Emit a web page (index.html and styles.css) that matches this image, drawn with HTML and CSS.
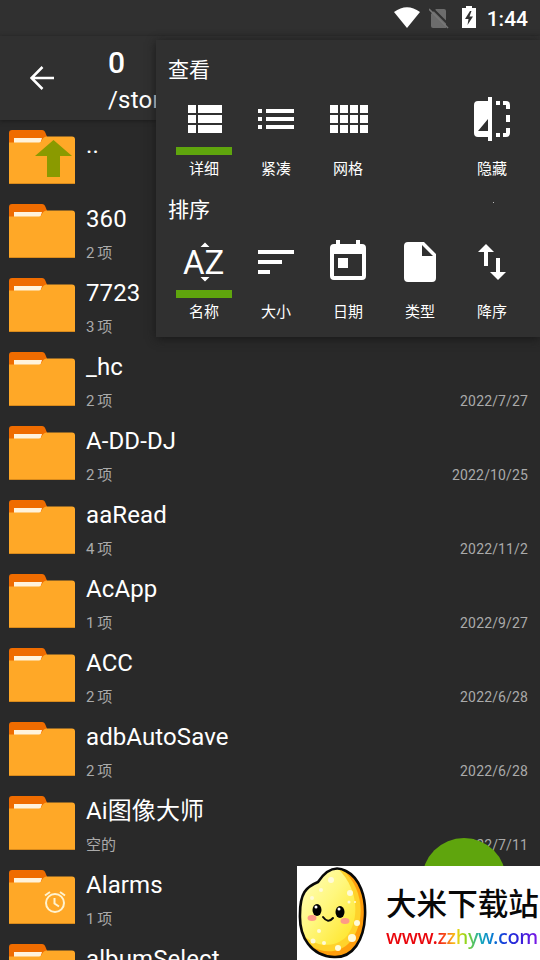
FILE: index.html
```html
<!DOCTYPE html>
<html lang="zh-CN">
<head>
<meta charset="utf-8">
<title>文件管理</title>
<link rel="stylesheet" href="styles.css">
</head>
<body>
<svg class="defs" width="0" height="0">
  <symbol id="folder" viewBox="0 0 66 54">
    <path fill="#ef6c00" d="M0 14V3Q0 0 3 0H33Q35.500 0 36.500 3L39 9V18H0Z"/>
    <path fill="#fff3dc" d="M5 8H33L31 14H5Z"/>
    <path fill="#ffa827" d="M0 12.500H30Q32 12.500 33 10Q34.500 6.500 38 6.500H63Q66 6.500 66 9.500V54H0Z"/>
    <path fill="#d98a1c" d="M0 53H66V54H0Z"/>
  </symbol>
</svg>
<div class="screen">
  <div class="status">
    <svg class="wifi" viewBox="0 0 26 21"><path fill="#fff" d="M0 5Q13-4.500 26 5L13 21Z"/></svg>
    <svg class="sim" viewBox="0 0 20 21"><path fill="#6c6c6c" d="M7 1H15Q17 1 17 3V20H4Q2 20 2 18V6Z"/><path stroke="#303030" stroke-width="2" d="M2-1L21 18"/><path stroke="#777" stroke-width="1.600" d="M0 1L19 20"/></svg>
    <svg class="battery" viewBox="0 0 14 22"><path fill="#fff" d="M4 0H10V2H14V22H0V2H4Z"/><path fill="#303030" d="M8 5L3 13H6.500L5.500 19L11 10.500H7.500L9.500 5Z"/></svg>
    <span class="clock">1:44</span>
  </div>
  <header class="header">
    <svg class="back" viewBox="0 0 24 24" fill="none" stroke="#fff" stroke-width="2.500"><path d="M24 12H2M12.500 1L1.500 12L12.500 23"/></svg>
    <div class="heading"><div class="title">0</div><div class="path">/storage</div></div>
  </header>
  <main class="list">
    <div class="row up"><div class="icon"><svg class="folder"><use href="#folder"/></svg><svg class="badge arrow" viewBox="0 0 37 37"><path fill="#8a9a00" d="M18.500 0L37 16H25V37H12V16H0Z"/></svg></div><div class="info"><div class="name">..</div></div></div>
    <div class="row"><svg class="folder"><use href="#folder"/></svg><div class="info"><div class="name">360</div><div class="count">2 项</div></div></div>
    <div class="row"><svg class="folder"><use href="#folder"/></svg><div class="info"><div class="name">7723</div><div class="count">3 项</div></div></div>
    <div class="row"><svg class="folder"><use href="#folder"/></svg><div class="info"><div class="name">_hc</div><div class="count">2 项</div></div><time>2022/7/27</time></div>
    <div class="row"><svg class="folder"><use href="#folder"/></svg><div class="info"><div class="name">A-DD-DJ</div><div class="count">2 项</div></div><time>2022/10/25</time></div>
    <div class="row"><svg class="folder"><use href="#folder"/></svg><div class="info"><div class="name">aaRead</div><div class="count">4 项</div></div><time>2022/11/2</time></div>
    <div class="row"><svg class="folder"><use href="#folder"/></svg><div class="info"><div class="name">AcApp</div><div class="count">1 项</div></div><time>2022/9/27</time></div>
    <div class="row"><svg class="folder"><use href="#folder"/></svg><div class="info"><div class="name">ACC</div><div class="count">2 项</div></div><time>2022/6/28</time></div>
    <div class="row"><svg class="folder"><use href="#folder"/></svg><div class="info"><div class="name">adbAutoSave</div><div class="count">2 项</div></div><time>2022/6/28</time></div>
    <div class="row"><svg class="folder"><use href="#folder"/></svg><div class="info"><div class="name">Ai图像大师</div><div class="count">空的</div></div><time>2022/7/11</time></div>
    <div class="row"><div class="icon"><svg class="folder"><use href="#folder"/></svg><svg class="badge alarm" viewBox="0 0 22 22" fill="none" stroke="#fff3d0" stroke-width="2"><circle cx="11" cy="12" r="9"/><path d="M10.500 7V12.500L15 15.500M1 4.500L6 1M21 4.500L16 1"/></svg></div><div class="info"><div class="name">Alarms</div><div class="count">1 项</div></div></div>
    <div class="row"><svg class="folder"><use href="#folder"/></svg><div class="info"><div class="name">albumSelect</div></div></div>
  </main>

  <div class="fab"></div>

  <section class="menu">
    <h2>查看</h2>
    <div class="options">
      <div class="option selected"><svg viewBox="0 0 48 48"><path d="M8 10h8v8H8zM18 10h24v8H18zM8 20h8v8H8zM18 20h24v8H18zM8 30h8v8H8zM18 30h24v8H18z"/></svg><i></i><span>详细</span></div>
      <div class="option"><svg viewBox="0 0 48 48"><path d="M6 14h4v4H6zM14 14h28v4H14zM6 22h4v4H6zM14 22h28v4H14zM6 30h4v4H6zM14 30h28v4H14z"/></svg><i></i><span>紧凑</span></div>
      <div class="option"><svg viewBox="0 0 48 48"><path d="M6 10h8v8H6zM16 10h8v8h-8zM26 10h8v8h-8zM36 10h8v8h-8zM6 20h8v8H6zM16 20h8v8h-8zM26 20h8v8h-8zM36 20h8v8h-8zM6 30h8v8H6zM16 30h8v8h-8zM26 30h8v8h-8zM36 30h8v8h-8z"/></svg><i></i><span>网格</span></div>
      <div class="option last"><svg viewBox="0 0 48 48"><path fill-rule="evenodd" d="M20 2h4v44h-4v-4H10q-4 0-4-4V10q0-4 4-4h10zM20 24L10 36h10z"/><path d="M28 6h4v4h-4zM28 38h4v4h-4zM35 6h3q4 0 4 4v4h-4v-4h-3zM38 20h4v7h-4zM38 33h4v5q0 4-4 4h-3v-4h3z"/></svg><i></i><span>隐藏</span></div>
    </div>
    <div class="sort-head"><h2>排序</h2><b class="dot"></b></div>
    <div class="options">
      <div class="option selected"><svg viewBox="0 0 48 48"><path d="M20.500 9L25 4.500L29.500 9zM20.500 39L25 43.500L29.500 39z"/><text x="3" y="35.500">A</text><text x="24.500" y="35.500">Z</text></svg><i></i><span>名称</span></div>
      <div class="option"><svg viewBox="0 0 48 48"><path d="M6 12h36v4H6zM6 22h24v4H6zM6 32h12v4H6z"/></svg><i></i><span>大小</span></div>
      <div class="option"><svg viewBox="0 0 48 48"><path fill-rule="evenodd" d="M12 2h4v4h16V2h4v4h2q4 0 4 4v28q0 4-4 4H10q-4 0-4-4V10q0-4 4-4h2zM10 16v22h28V16zM14 20h10v10H14z"/></svg><i></i><span>日期</span></div>
      <div class="option"><svg viewBox="0 0 48 48"><path fill-rule="evenodd" d="M12 4h16l12 12v24q0 4-4 4H12q-4 0-4-4V8q0-4 4-4zM26 7v11h11z"/></svg><i></i><span>类型</span></div>
      <div class="option"><svg viewBox="0 0 48 48"><path d="M10 14L18 6L26 14H20V28H16V14zM28 20h4v14h6L30 42L22 34H28z"/></svg><i></i><span>降序</span></div>
    </div>
  </section>

  <aside class="brand">
    <svg class="rice" viewBox="0 0 70 94">
      <defs>
        <linearGradient id="skin" x1="0" y1="0" x2="1" y2="1"><stop offset="0" stop-color="#ffffc9"/><stop offset=".5" stop-color="#fff77d"/><stop offset="1" stop-color="#ffe31e"/></linearGradient>
        <clipPath id="body"><path d="M21 16C29 4 38 -1 49 5C63 12 69 31 68 50C67 74 56 92 37 91C14 90 2 71 3 48C3 27 9 21 21 16Z"/></clipPath>
      </defs>
      <g clip-path="url(#body)">
        <path fill="#ff9d0c" d="M0 0H70V94H0Z"/>
        <path fill="#ffd22b" d="M42 0C67 20 70 55 53 76C38 93 10 85 3 67L0 0Z"/>
        <path fill="url(#skin)" d="M38 0C62 20 64 55 48 72C34 84 12 80 0 62V0Z"/>
        <g fill="#fffbd9"><circle cx="53" cy="27" r="3"/><circle cx="60" cy="57" r="3"/><circle cx="55" cy="72" r="4"/><circle cx="41" cy="82" r="3"/><circle cx="27" cy="77" r="2"/><circle cx="16" cy="75" r="2.500"/><circle cx="52" cy="36" r="1.500"/><circle cx="58" cy="36" r="1"/><circle cx="24" cy="24" r="2"/><circle cx="34" cy="14" r="3"/><circle cx="15" cy="32" r="2"/><circle cx="22" cy="65" r="2"/></g>
      </g>
      <path fill="none" stroke="#080808" stroke-width="2.600" d="M21 16C29 4 38 -1 49 5C63 12 69 31 68 50C67 74 56 92 37 91C14 90 2 71 3 48C3 27 9 21 21 16Z"/>
      <ellipse cx="20" cy="44" rx="4.500" ry="6"/><ellipse cx="43" cy="46" rx="4.500" ry="6"/>
      <circle cx="19" cy="41" r="1.500" fill="#fff"/><circle cx="42" cy="43" r="1.500" fill="#fff"/>
      <path fill="none" stroke="#080808" stroke-width="2" stroke-linecap="round" d="M26 51Q31 58 36 52"/>
      <ellipse cx="15" cy="52" rx="4.500" ry="3" fill="#ff9a86"/><ellipse cx="48" cy="55" rx="4.500" ry="3" fill="#ff9a86"/>
    </svg>
    <div class="brand-text"><div class="brand-name">大米下载站</div><div class="brand-url">www.zzhyw.com</div></div>
  </aside>
</div>
</body>
</html>
```
FILE: styles.css
```css
* { box-sizing: border-box; }
body {
  margin: 0;
  background: #292929;
  color: #fff;
  font-family: Roboto, "Noto Sans CJK SC", sans-serif;
}
svg { display: block; flex: none; }
.defs { position: absolute; }
.screen {
  position: relative;
  width: 540px;
  height: 960px;
  overflow: hidden;
  display: flex;
  flex-direction: column;
}
.status {
  height: 36px;
  flex: none;
  display: flex;
  justify-content: flex-end;
  padding: 6px 12px 0 0;
  background: #303030;
}
.wifi { width: 26px; height: 21px; margin: 1px 9px 0 0; }
.sim { width: 20px; height: 21px; margin: 2px 13px 0 0; }
.battery { width: 14px; height: 22px; margin-right: 11px; }
.clock { font-size: 21px; line-height: 26px; font-weight: 500; }
.header {
  height: 84px;
  flex: none;
  display: flex;
  padding-left: 30px;
  background: #303030;
  box-shadow: 0 1px 4px #1b1b1b;
  z-index: 1;
}
.back { width: 24px; height: 24px; margin-top: 30px; }
.heading { margin-left: 54px; padding-top: 8px; }
.title { font-size: 30px; line-height: 38px; font-weight: 500; }
.path { font-size: 24px; line-height: 36px; letter-spacing: .2px; }
.list { flex: none; }
.row {
  height: 74px;
  display: flex;
  padding: 10px 12px 0 9px;
}
.icon { position: relative; flex: none; width: 66px; height: 54px; }
.folder { width: 66px; height: 54px; }
.badge { position: absolute; }
.arrow { left: 26px; top: 10px; width: 37px; height: 37px; }
.alarm { left: 35px; top: 21px; width: 22px; height: 22px; }
.info { margin-left: 11px; flex: 1; }
.name { font-size: 24px; line-height: 30px; letter-spacing: .1px; white-space: nowrap; }
.up .name { line-height: 30px; }
.count { font-size: 15px; line-height: 20px; margin-top: 9px; color: #aaa; white-space: nowrap; word-spacing: -1px; }
time { font-size: 14px; line-height: 20px; margin-top: 39px; color: #aaa; letter-spacing: .14px; }
.fab {
  position: absolute;
  left: 422px;
  top: 838px;
  width: 84px;
  height: 84px;
  border-radius: 50%;
  background: #5fa50d;
}
.menu {
  position: absolute;
  z-index: 2;
  left: 156px;
  top: 40px;
  width: 384px;
  height: 297px;
  padding: 12px 12px 0;
  background: #303030;
  box-shadow: 0 2px 9px #191919;
}
h2 { margin: 0; font-size: 21px; line-height: 36px; height: 36px; font-weight: 400; }
.options { display: grid; grid-template-columns: repeat(5, 72px); margin-top: 7px; }
.option { display: flex; flex-direction: column; align-items: center; font-size: 15px; line-height: 22px; }
.option.last { grid-column: 5; }
.option svg { width: 48px; height: 48px; fill: #fff; }
.option svg text { font: 400 33px Roboto, sans-serif; }
.option i { width: 56px; height: 8px; margin: 4px 0 3px; }
.selected i { background: #5fa50d; }
.sort-head { display: flex; height: 36px; margin-top: 12px; justify-content: space-between; }
.sort-head + .options { margin-top: 10px; }
.dot { width: 1px; height: 1px; margin: 10px 34px 0 0; background: #bbb; }
.brand {
  position: absolute;
  z-index: 3;
  left: 297px;
  top: 866px;
  width: 243px;
  height: 94px;
  display: flex;
  background: #fff;
}
.rice { width: 70px; height: 94px; }
.brand-text { margin-left: 19px; padding-top: 14px; white-space: nowrap; }
.brand-name { color: #080808; font: 500 30.600px/45px "Noto Sans CJK SC", sans-serif; }
.brand-url {
  width: 153px;
  font: 500 20px/24px "Noto Sans", sans-serif;
  letter-spacing: -.4px;
  color: transparent;
  background: linear-gradient(90deg, #e9060b 32%, #f8481b 38%, #f8d415 46%, #85d51d 53%, #15a9ba 62%, #087fd1 69%, #1634db 78%, #3520d8 88%, #8219e8);
  -webkit-background-clip: text;
  background-clip: text;
}
```
